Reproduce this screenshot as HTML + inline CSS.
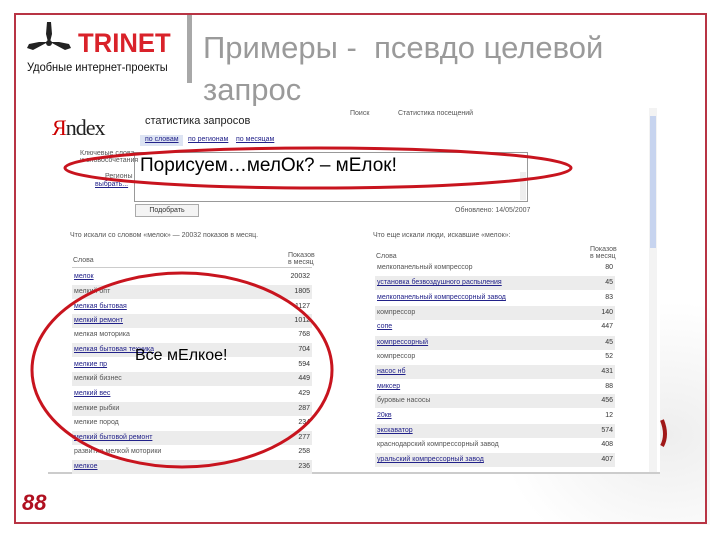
<!DOCTYPE html>
<html><head><meta charset="utf-8"><style>
body{margin:0;width:720px;height:540px;position:relative;background:#fff;font-family:"Liberation Sans","DejaVu Sans",sans-serif;overflow:hidden}
.a{position:absolute}
.t{font-size:7px;color:#555;white-space:nowrap}
.l{color:#22228a;text-decoration:underline}
.row{position:absolute;height:14px;font-size:7px;line-height:14px;color:#555}
.row span{position:absolute;left:2px}
.row b{position:absolute;right:2px;font-weight:normal;color:#333}
</style></head><body>
<div class="a" style="left:500px;top:300px;width:210px;height:225px;background:radial-gradient(ellipse at 80% 60%,#eee,#fff 70%)"></div>
<div class="a" style="left:14px;top:13px;width:689px;height:507px;border:2px solid #b83444"></div>
<svg class="a" style="left:25px;top:20px" width="48" height="40" viewBox="0 0 48 40">
<path d="M22 2 L26 2 L27 14 L25 22 L23 22 L21 14Z" fill="#222"/>
<path d="M23 22 L8 30 L2 28 L4 24 L14 22Z" fill="#222"/>
<path d="M25 22 L40 30 L46 28 L44 24 L34 22Z" fill="#222"/>
<circle cx="24" cy="23" r="3" fill="#222"/>
</svg>
<div class="a" style="left:78px;top:28px;font-size:27px;font-weight:bold;color:#d9222a;transform:scaleX(0.95);transform-origin:left">TRINET</div>
<div class="a" style="left:27px;top:62px;font-size:11.5px;color:#111;transform:scaleX(0.96);transform-origin:left">Удобные интернет-проекты</div>
<div class="a" style="left:187px;top:15px;width:5px;height:68px;background:#a8a8a8"></div>
<div class="a" style="left:203px;top:27px;font-size:31px;color:#9a9a9a;line-height:42px">Примеры - &nbsp;псевдо целевой<br>запрос</div>

<div class="a" style="left:48px;top:106px;width:612px;height:366px;background:#fff;border-bottom:2px solid #ccc"></div>
<div class="a" style="left:649px;top:108px;width:8px;height:364px;background:#f3f3f3"></div>
<div class="a" style="left:650px;top:116px;width:6px;height:132px;background:#c7d4ef"></div>
<div class="a" style="left:52px;top:115px;font-family:'Liberation Serif',serif;font-size:22px;color:#222;letter-spacing:-1px"><span style="color:#c00">Я</span>ndex</div>
<div class="a" style="left:145px;top:115px;font-size:11px;color:#222">статистика запросов</div>
<div class="a t" style="left:350px;top:110px">Поиск</div>
<div class="a t" style="left:398px;top:110px">Статистика посещений</div>
<div class="a" style="left:140px;top:135px;width:43px;height:11px;background:#dde4f3"></div>
<div class="a t l" style="left:145px;top:136px">по словам</div>
<div class="a t l" style="left:188px;top:136px">по регионам</div>
<div class="a t l" style="left:236px;top:136px">по месяцам</div>
<div class="a t" style="left:80px;top:150px">Ключевые слова<br>и словосочетания</div>
<div class="a t" style="left:105px;top:173px">Регионы</div>
<div class="a t l" style="left:95px;top:181px">выбрать...</div>
<div class="a" style="left:134px;top:152px;width:392px;height:48px;border:1px solid #999"></div>
<div class="a" style="left:520px;top:172px;width:6px;height:28px;background:#eee"></div>
<div class="a" style="left:135px;top:204px;width:62px;height:11px;border:1px solid #aaa;background:#f4f4f4;font-size:7px;text-align:center;line-height:11px;color:#333">Подобрать</div>
<div class="a t" style="left:455px;top:207px">Обновлено: 14/05/2007</div>
<div class="a t" style="left:70px;top:232px">Что искали со словом «мелок» — 20032 показов в месяц.</div>
<div class="a t" style="left:373px;top:232px">Что еще искали люди, искавшие «мелок»:</div>
<div class="a t" style="left:73px;top:257px">Слова</div>
<div class="a t" style="left:288px;top:252px">Показов<br>в месяц</div>
<div class="a" style="left:72px;top:267px;width:240px;height:1px;background:#ccc"></div>
<div class="a t" style="left:376px;top:253px">Слова</div>
<div class="a t" style="left:590px;top:246px">Показов<br>в месяц</div>

<div class="row" style="left:72px;width:240px;top:270px"><span class="l">мелок</span><b>20032</b></div>
<div class="row" style="left:72px;width:240px;top:285px;background:#ececec"><span>мелкий опт</span><b>1805</b></div>
<div class="row" style="left:72px;width:240px;top:300px"><span class="l">мелкая бытовая</span><b>1127</b></div>
<div class="row" style="left:72px;width:240px;top:314px;background:#ececec"><span class="l">мелкий ремонт</span><b>1012</b></div>
<div class="row" style="left:72px;width:240px;top:328px"><span>мелкая моторика</span><b>768</b></div>
<div class="row" style="left:72px;width:240px;top:343px;background:#ececec"><span class="l">мелкая бытовая техника</span><b>704</b></div>
<div class="row" style="left:72px;width:240px;top:358px"><span class="l">мелкие пр</span><b>594</b></div>
<div class="row" style="left:72px;width:240px;top:372px;background:#ececec"><span>мелкий бизнес</span><b>449</b></div>
<div class="row" style="left:72px;width:240px;top:387px"><span class="l">мелкий вес</span><b>429</b></div>
<div class="row" style="left:72px;width:240px;top:402px;background:#ececec"><span>мелкие рыбки</span><b>287</b></div>
<div class="row" style="left:72px;width:240px;top:416px"><span>мелкие пород</span><b>234</b></div>
<div class="row" style="left:72px;width:240px;top:431px;background:#ececec"><span class="l">мелкий бытовой ремонт</span><b>277</b></div>
<div class="row" style="left:72px;width:240px;top:445px"><span>развитие мелкой моторики</span><b>258</b></div>
<div class="row" style="left:72px;width:240px;top:460px;background:#ececec"><span class="l">мелкое</span><b>236</b></div>

<div class="row" style="left:375px;width:240px;top:261px"><span>мелкопанельный компрессор</span><b>80</b></div>
<div class="row" style="left:375px;width:240px;top:276px;background:#ececec"><span class="l">установка безвоздушного распыления</span><b>45</b></div>
<div class="row" style="left:375px;width:240px;top:291px"><span class="l">мелкопанельный компрессорный завод</span><b>83</b></div>
<div class="row" style="left:375px;width:240px;top:306px;background:#ececec"><span>компрессор</span><b>140</b></div>
<div class="row" style="left:375px;width:240px;top:320px"><span class="l">сопе</span><b>447</b></div>
<div class="row" style="left:375px;width:240px;top:336px;background:#ececec"><span class="l">компрессорный</span><b>45</b></div>
<div class="row" style="left:375px;width:240px;top:350px"><span>компрессор</span><b>52</b></div>
<div class="row" style="left:375px;width:240px;top:365px;background:#ececec"><span class="l">насос нб</span><b>431</b></div>
<div class="row" style="left:375px;width:240px;top:380px"><span class="l">миксер</span><b>88</b></div>
<div class="row" style="left:375px;width:240px;top:394px;background:#ececec"><span>буровые насосы</span><b>456</b></div>
<div class="row" style="left:375px;width:240px;top:409px"><span class="l">20кв</span><b>12</b></div>
<div class="row" style="left:375px;width:240px;top:424px;background:#ececec"><span class="l">экскаватор</span><b>574</b></div>
<div class="row" style="left:375px;width:240px;top:438px"><span>краснодарский компрессорный завод</span><b>408</b></div>
<div class="row" style="left:375px;width:240px;top:453px;background:#ececec"><span class="l">уральский компрессорный завод</span><b>407</b></div>

<svg class="a" style="left:0;top:0" width="720" height="540">
<ellipse cx="318" cy="168" rx="253" ry="20" fill="none" stroke="#c8141e" stroke-width="3"/>
<ellipse cx="182" cy="370" rx="150" ry="97" fill="none" stroke="#c8141e" stroke-width="3"/>
<path d="M662 420 Q668 435 662 446" fill="none" stroke="#a01818" stroke-width="4"/>
</svg>
<div class="a" style="left:140px;top:155px;font-size:19px;color:#000">Порисуем…мелОк? – мЕлок!</div>
<div class="a" style="left:135px;top:347px;font-size:16px;color:#000">Все мЕлкое!</div>
<div class="a" style="left:22px;top:490px;font-size:22px;font-weight:bold;font-style:italic;color:#b01020">88</div>
</body></html>
